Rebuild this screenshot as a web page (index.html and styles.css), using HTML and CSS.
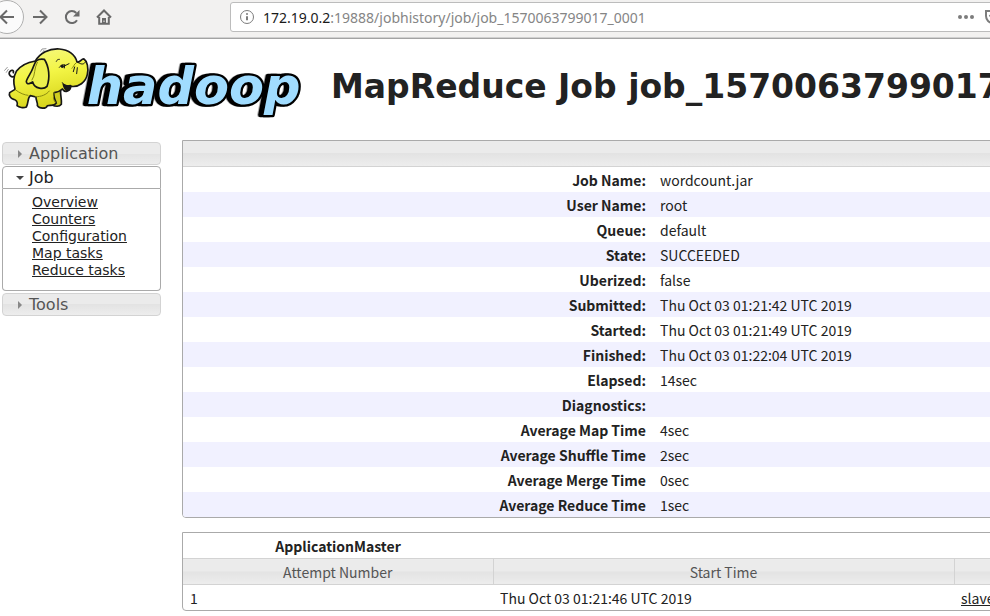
FILE: index.html
```html
<!DOCTYPE html>
<html lang="en">
<head>
<meta charset="utf-8">
<title>MapReduce Job</title>
<link rel="stylesheet" href="styles.css">
</head>
<body>
<div class="toolbar">
  <button class="nav-button back" aria-label="Back"><svg viewBox="0 0 16 16"><path d="M15 8H2M8 1.5 1.5 8 8 14.5"/></svg></button>
  <button class="nav-button" aria-label="Forward"><svg viewBox="0 0 16 16"><path d="M1 8h13M8 1.5 14.5 8 8 14.5"/></svg></button>
  <button class="nav-button" aria-label="Reload"><svg viewBox="0 0 16 16"><path d="M13 11.2A6 6 0 1 1 12.3 4"/><path class="solid" d="M15.5 1v6.5H9z"/></svg></button>
  <button class="nav-button" aria-label="Home"><svg viewBox="0 0 16 16"><path d="M1 8.5 8 1.5l7 7M3.2 8v6.8h9.6V8"/><path class="solid" d="M6 9h4v6H6z"/><path class="hole" d="M8 11.5v1.5"/></svg></button>
  <div class="address">
    <svg class="info" viewBox="0 0 16 16"><circle cx="8" cy="8" r="6.5"/><path d="M8 7.2v4M8 4.2v1.6"/></svg>
    <div class="url"><span class="host">172.19.0.2</span>:19888/jobhistory/job/job_1570063799017_0001</div>
    <button class="address-button" aria-label="Page actions"><svg class="dots" viewBox="0 0 18 16"><circle cx="3" cy="8" r="2"/><circle cx="9" cy="8" r="2"/><circle cx="15" cy="8" r="2"/></svg></button>
    <button class="address-button" aria-label="Save"><svg class="pocket" viewBox="0 0 16 16"><path d="M1 2h14v5a7 7 0 0 1-14 0zM4.5 6 8 9.500l3.500-3.500"/></svg></button>
  </div>
</div>

<header class="page-header">
  <svg class="logo" viewBox="0 0 915 240" role="img" aria-label="hadoop">
    <defs>
      <linearGradient id="skin" x1="0" y1="0" x2="0.3" y2="1">
        <stop offset="0" stop-color="#f6f98a"/><stop offset="0.5" stop-color="#f3f545"/><stop offset="1" stop-color="#d8d51c"/>
      </linearGradient>
    </defs>
    <text class="wordmark" x="260" y="193">hadoop</text>
    <g class="elephant">
      <path d="M46 108C34 115 24 104 29 95C34 88 43 91 40 98" fill="none"/>
      <path d="M146 166 182 148C180 165 186 178 184 193C178 201 165 199 155 195Z" fill="#cfcd20"/>
      <path d="M49 94C62 76 82 67 106 63C120 39 147 25 178 27C207 29 226 45 231 66C241 69 244 55 252 57C262 64 266 84 262 103C257 127 236 142 213 139C209 156 194 158 187 147C179 155 169 157 163 158C158 169 166 180 169 190C161 200 151 194 142 197C139 207 118 207 112 197C114 187 107 180 108 171L91 167C82 174 86 189 79 201C70 205 57 202 51 197C55 185 47 180 41 178C31 176 26 165 29 158L45 148C40 130 40 110 49 94Z" fill="url(#skin)"/>
      <path d="M133 58C108 54 105 67 99 83C94 98 81 114 79 124C80 137 93 129 98 126C104 148 132 149 141 139C151 113 147 79 133 58Z" fill="#edf04d"/>
      <path class="shade" d="M112 67C101 86 107 105 96 120M47 150C60 160 74 165 84 166M107 170C122 171 140 164 148 153M168 188C158 181 159 170 163 159M228 69C222 72 221 81 216 85"/>
      <path class="fine" d="M169 64C171 59 174 58 178 58M178 82C184 72 193 73 195 77L207 71M194 74 193 84M235 68C247 75 252 73 257 65M224 81 220 95M232 83 230 101M187 128C191 136 197 138 213 137"/>
      <path d="M190 133C197 138 204 139 211 137C211 148 205 153 200 151C194 149 192 141 190 133Z" fill="#171717"/>
      <ellipse class="eye" cx="187" cy="79" rx="5" ry="5"/>
      <path class="motion" d="M14 91 22 82M19 97 25 88M122 34 126 27 138 26M127 38 132 31"/>
    </g>
  </svg>
  <h1>MapReduce Job job_1570063799017</h1>
</header>

<div class="layout">
  <nav class="sidebar">
    <h3 class="section"><button>Application</button></h3>
    <h3 class="section open"><button>Job</button></h3>
    <ul class="links">
      <li><a href="#">Overview</a></li>
      <li><a href="#">Counters</a></li>
      <li><a href="#">Configuration</a></li>
      <li><a href="#">Map tasks</a></li>
      <li><a href="#">Reduce tasks</a></li>
    </ul>
    <h3 class="section"><button>Tools</button></h3>
  </nav>

  <main>
    <div class="panel">
      <div class="panel-title"></div>
      <table class="info-table">
        <tr><th scope="row">Job Name:</th><td>wordcount.jar</td></tr>
        <tr><th scope="row">User Name:</th><td>root</td></tr>
        <tr><th scope="row">Queue:</th><td>default</td></tr>
        <tr><th scope="row">State:</th><td>SUCCEEDED</td></tr>
        <tr><th scope="row">Uberized:</th><td>false</td></tr>
        <tr><th scope="row">Submitted:</th><td>Thu Oct 03 01:21:42 UTC 2019</td></tr>
        <tr><th scope="row">Started:</th><td>Thu Oct 03 01:21:49 UTC 2019</td></tr>
        <tr><th scope="row">Finished:</th><td>Thu Oct 03 01:22:04 UTC 2019</td></tr>
        <tr><th scope="row">Elapsed:</th><td>14sec</td></tr>
        <tr><th scope="row">Diagnostics:</th><td></td></tr>
        <tr><th scope="row">Average Map Time</th><td>4sec</td></tr>
        <tr><th scope="row">Average Shuffle Time</th><td>2sec</td></tr>
        <tr><th scope="row">Average Merge Time</th><td>0sec</td></tr>
        <tr><th scope="row">Average Reduce Time</th><td>1sec</td></tr>
      </table>
    </div>

    <div class="panel">
      <table class="attempts">
        <colgroup><col class="col-attempt"><col class="col-start"><col></colgroup>
        <tr class="group"><th>ApplicationMaster</th><td colspan="2"></td></tr>
        <tr class="heads"><th scope="col">Attempt Number</th><th scope="col">Start Time</th><th></th></tr>
        <tr><td>1</td><td>Thu Oct 03 01:21:46 UTC 2019</td><td><a href="#">slave</a></td></tr>
      </table>
    </div>
  </main>
</div>
</body>
</html>
```

FILE: styles.css
```css
* {
  box-sizing: border-box;
}

body {
  margin: 0;
  overflow-x: hidden;
  background: #fff;
  color: #222;
  font-family: "DejaVu Sans", sans-serif;
}

button {
  padding: 0;
  border: 0;
  background: none;
  color: inherit;
  font: inherit;
}

a {
  color: inherit;
}

/* Browser toolbar */
.toolbar {
  display: flex;
  align-items: center;
  height: 39px;
  padding-bottom: 4px;
  overflow: hidden;
  border-bottom: 1px solid #a3a3a3;
  background: #f2f1f0;
  box-shadow: inset 0 -1px #d0d0d0;
}

.nav-button {
  display: flex;
  flex: none;
  align-items: center;
  justify-content: center;
  width: 32px;
  height: 32px;
}

.nav-button svg {
  width: 16px;
  height: 16px;
  fill: none;
  stroke: #6a6a6a;
  stroke-width: 2;
}

.nav-button .solid {
  fill: #6a6a6a;
  stroke: none;
}

.nav-button .hole {
  stroke: #f2f1f0;
  stroke-width: 1;
}

.nav-button.back {
  width: 34px;
  height: 34px;
  margin-left: -10px;
  border: 1px solid #b0b0b0;
  border-radius: 50%;
  background: #fbfbfb;
}

.address {
  display: flex;
  flex: 1;
  align-items: center;
  height: 30px;
  margin-left: 110px;
  margin-right: -12px;
  padding-left: 8px;
  border: 1px solid #bcbcbc;
  border-radius: 3px;
  background: #fff;
}

.info {
  flex: none;
  width: 16px;
  height: 16px;
  fill: none;
  stroke: #7c7c7c;
}

.info path {
  stroke-width: 2;
}

.url {
  flex: 1;
  margin-left: 8px;
  color: #858585;
  font-family: "Noto Sans", sans-serif;
  font-size: 14px;
  white-space: nowrap;
}

.host {
  color: #1a1a1a;
}

.address-button {
  display: flex;
  margin-left: 10px;
}

.dots {
  width: 18px;
  height: 16px;
  fill: #7c7c7c;
}

.pocket {
  width: 16px;
  height: 16px;
  fill: none;
  stroke: #7c7c7c;
  stroke-width: 2;
}

/* Page header */
.page-header {
  display: flex;
  align-items: center;
  height: 101px;
  padding-top: 1px;
  overflow: hidden;
}

.logo {
  flex: none;
  align-self: flex-start;
  width: 305px;
  height: 80px;
}

.wordmark {
  fill: #a0dcff;
  stroke: #000;
  stroke-width: 14px;
  stroke-linejoin: round;
  paint-order: stroke;
  font-family: "DejaVu Sans", sans-serif;
  font-size: 153px;
  font-style: oblique;
  font-weight: bold;
  filter: drop-shadow(-10px 0 0 #000);
}

.elephant {
  fill: none;
  stroke: #171717;
  stroke-width: 5;
  stroke-linecap: round;
  stroke-linejoin: round;
}

.elephant .shade {
  stroke: #8a8a10;
  stroke-width: 3;
}

.elephant .fine {
  stroke-width: 3;
}

.elephant .eye {
  fill: #171717;
  stroke: none;
}

.elephant .motion {
  stroke: #666;
  stroke-width: 2;
}

h1 {
  margin: 0 0 8px 26px;
  font-size: 33px;
  white-space: nowrap;
}

/* Columns */
.layout {
  display: flex;
  align-items: flex-start;
}

.sidebar {
  flex: none;
  width: 159px;
  margin: 2px 21px 0 2px;
}

.section {
  margin: 0 0 1px;
  border: 1px solid #d3d3d3;
  border-radius: 4px;
  background: linear-gradient(#ebebeb 50%, #e3e3e3 50%, #ededed);
  color: #555;
  font-size: 16px;
  font-weight: normal;
}

.section button {
  display: flex;
  align-items: center;
  width: 100%;
  height: 21px;
  padding-left: 15px;
}

.section button::before {
  content: "";
  width: 0;
  margin-right: 7px;
  border: solid transparent;
  border-width: 4px 0 4px 4px;
  border-left-color: #888;
}

.section.open {
  margin: 0;
  border-color: #aaa;
  border-radius: 4px 4px 0 0;
  background: #fff;
  color: #222;
}

.section.open button {
  padding-left: 13px;
}

.section.open button::before {
  margin-right: 5px;
  border: solid transparent;
  border-width: 4px 4px 0;
  border-top-color: #444;
}

.links {
  margin: 0 0 2px;
  padding: 5px 0 11px 29px;
  border: 1px solid #aaa;
  border-top: 0;
  border-radius: 0 0 4px 4px;
  font-size: 14px;
  line-height: 17px;
  list-style: none;
}

main {
  flex: 1;
  min-width: 0;
  font-family: "Noto Sans CJK SC", sans-serif;
  font-size: 14px;
  line-height: 24px;
}

.panel {
  margin: 0 -8px 14px 0;
  overflow: hidden;
  border: 1px solid #aaa;
  border-radius: 0 0 4px 4px;
}

.panel-title {
  height: 26px;
  border-bottom: 1px solid #d3d3d3;
  background: linear-gradient(#ebebeb 50%, #e3e3e3 50%, #ededed);
}

table {
  width: 100%;
  border-collapse: collapse;
  table-layout: fixed;
}

th,
td {
  height: 25px;
  padding: 1px 7px 0;
  text-align: left;
  white-space: nowrap;
}

.info-table th {
  width: 470px;
  text-align: right;
}

.info-table tr:nth-child(even) {
  background: #f1f1ff;
}

.col-attempt {
  width: 310px;
}

.col-start {
  width: 461px;
}

.attempts th {
  text-align: center;
}

.heads th {
  border: solid #d3d3d3;
  border-width: 1px 1px 1px 0;
  background: linear-gradient(#ebebeb 50%, #e3e3e3 50%, #ededed);
  color: #555;
  font-weight: normal;
}
```
